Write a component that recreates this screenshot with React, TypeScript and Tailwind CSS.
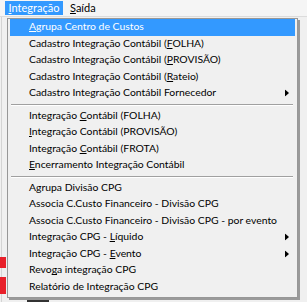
import React from "react";

type Item = { pre?: string; u?: string; post?: string; text?: string; arrow?: boolean; active?: boolean } | "sep";

const items: Item[] = [
  { pre: "", u: "A", post: "grupa Centro de Custos", active: true },
  { pre: "Cadastro Integração Contábil (", u: "F", post: "OLHA)" },
  { pre: "Cadastro Integração Contábil (", u: "P", post: "ROVISÃO)" },
  { pre: "Cadastro Integração Contábil (", u: "R", post: "ateio)" },
  { text: "Cadastro Integração Contábil Fornecedor", arrow: true },
  "sep",
  { pre: "Integração ", u: "C", post: "ontábil (FOLHA)" },
  { pre: "", u: "I", post: "ntegração Contábil (PROVISÃO)" },
  { pre: "Integração ", u: "C", post: "ontábil (FROTA)" },
  { pre: "", u: "E", post: "ncerramento Integração Contábil" },
  "sep",
  { text: "Agrupa Divisão CPG" },
  { text: "Associa C.Custo Financeiro - Divisão CPG" },
  { text: "Associa C.Custo Financeiro - Divisão CPG - por evento" },
  { pre: "Integração CPG - ", u: "L", post: "íquido", arrow: true },
  { pre: "Integração CPG - ", u: "E", post: "vento", arrow: true },
  { pre: "Revo", u: "g", post: "a integração CPG" },
  { text: "Relatório de Integração CPG" },
];

function Arrow() {
  return (
    <svg width="4" height="7" viewBox="0 0 4 7" className="absolute right-[6px] top-1/2 -translate-y-1/2">
      <path d="M0 0 L4 3.5 L0 7 Z" fill="#000" />
    </svg>
  );
}

export default function App() {
  return (
    <div
      className="relative w-[307px] h-[302px] bg-[#f0f0f0] overflow-hidden text-[10.4px] text-black"
      style={{ fontFamily: 'Lato, "Noto Sans", sans-serif' }}
    >
      <div className="flex h-[17px] items-center pl-[5px] border-b border-[#dcdcdc] bg-[#f5f5f5] text-[11px]">
        <div className="h-[14px] w-[58px] flex items-center justify-center bg-[#3399ff] text-white">
          <span><span className="underline">I</span>ntegração</span>
        </div>
        <div className="h-[14px] flex items-center pl-[7px]">
          <span><span className="underline">S</span>aída</span>
        </div>
      </div>
      <div className="absolute left-[1px] top-[17px] w-[1px] h-[290px] bg-[#d4d4d4]" />
      <div className="absolute left-0 top-[257px] w-[6px] h-[11px] bg-[#e8202a]" />
      <div className="absolute left-0 top-[277px] w-[6px] h-[17px] bg-[#e8202a]" />
      <div className="absolute left-[27px] top-[297px] w-[22px] h-[8px] rounded-[3px] bg-[#333]" />

      <div className="absolute left-[7px] top-[18px] w-[291px] border border-[#979797] bg-[#f0f0f0] px-[2px] pt-0 pb-[2px] shadow-[2px_2px_0_#9a9a9a]">
        {items.map((it, i) =>
          it === "sep" ? (
            <div key={i} className="h-[6px] flex items-center pl-[1px] pr-[2px]">
              <div className="w-full h-[2px] border-t border-[#a0a0a0] border-b-white border-b" />
            </div>
          ) : (
            <div
              key={i}
              className={
                "relative h-[16.5px] flex items-center pl-[19px] whitespace-nowrap " +
                (it.active ? "bg-[#3399ff] text-white" : "")
              }
            >
              {it.text !== undefined ? (
                <span>{it.text}</span>
              ) : (
                <span>
                  {it.pre}
                  <span className="underline">{it.u}</span>
                  {it.post}
                </span>
              )}
              {it.arrow && <Arrow />}
            </div>
          )
        )}
      </div>
    </div>
  );
}
